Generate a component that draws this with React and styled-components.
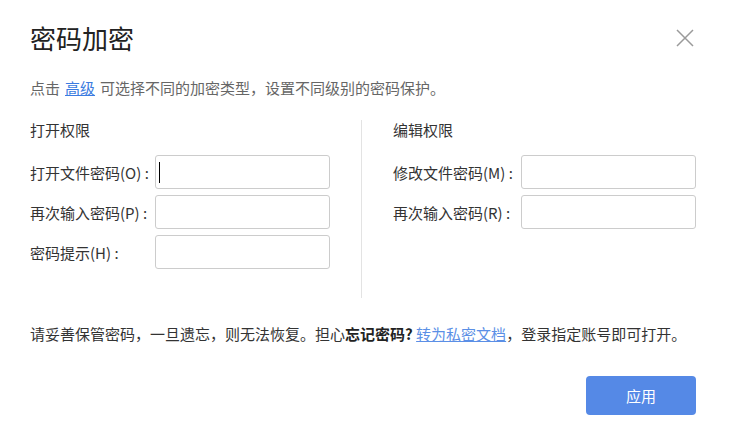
import React from "react";
import styled, { createGlobalStyle } from "styled-components";

const Global = createGlobalStyle`
  html, body {
    margin: 0;
    padding: 0;
    background: #fff;
  }
  body {
    font-family: "Noto Sans CJK SC", "Noto Sans", sans-serif;
    color: #333;
  }
`;

const Dialog = styled.div`
  width: 731px;
  height: 437px;
  box-sizing: border-box;
  padding: 18px 35px 0 30px;
  background: #fff;
  display: flex;
  flex-direction: column;
`;

const Header = styled.div`
  display: flex;
  align-items: center;
  justify-content: space-between;
  height: 40px;
`;

const Title = styled.h1`
  margin: 0;
  font-size: 26px;
  font-weight: 400;
  color: #222;
  line-height: 40px;
`;

const Close = styled.button`
  border: none;
  background: none;
  padding: 0;
  width: 18px;
  height: 18px;
  margin-right: 2px;
  cursor: pointer;
  display: flex;
`;

const Intro = styled.p`
  margin: 20px 0 0;
  font-size: 15px;
  line-height: 20px;
  color: #666;
`;

const Link = styled.a`
  color: ${p => (p.$light ? "#5b8fe6" : "#3b7be0")};
  text-decoration: underline;
  cursor: pointer;
  margin: ${p => (p.$spaced ? "0 5px" : "0")};
`;

const Columns = styled.div`
  display: flex;
  margin-top: 22px;
`;

const Column = styled.div`
  flex: ${p => (p.$right ? "1" : "0 0 331px")};
  box-sizing: border-box;
  padding: ${p => (p.$right ? "0 0 29px 31px" : "0 31px 29px 0")};
  border-left: ${p => (p.$right ? "1px solid #e3e3e3" : "none")};
`;

const Heading = styled.div`
  font-size: 15px;
  line-height: 20px;
  color: #333;
  margin-bottom: 15px;
`;

const Fields = styled.div`
  display: flex;
  flex-direction: column;
  gap: 6px;
`;

const Row = styled.label`
  display: grid;
  grid-template-columns: ${p => p.$labelWidth}px 1fr;
  align-items: center;
`;

const LabelText = styled.span`
  font-size: 15px;
  color: #333;
  white-space: nowrap;
`;

const InputWrap = styled.div`
  position: relative;
`;

const Input = styled.input`
  width: 100%;
  height: 34px;
  box-sizing: border-box;
  border: 1px solid #ccc;
  border-radius: 3px;
  outline: none;
  padding: 0 8px;
  font-size: 14px;
  font-family: inherit;
  background: #fff;
`;

const Caret = styled.span`
  position: absolute;
  left: 4px;
  top: 7px;
  width: 1px;
  height: 21px;
  background: #000;
`;

const Notice = styled.p`
  margin: 26px 0 0;
  font-size: 15px;
  line-height: 20px;
  color: #333;
  white-space: nowrap;

  b {
    font-weight: 700;
    color: #222;
  }
`;

const Footer = styled.div`
  display: flex;
  justify-content: flex-end;
  margin-top: 32px;
`;

const ApplyButton = styled.button`
  width: 110px;
  height: 39px;
  border: none;
  border-radius: 4px;
  background: #5589e6;
  color: #fff;
  font-size: 15px;
  font-family: inherit;
  cursor: pointer;
`;

const CloseIcon = () => (
  <svg width="18" height="18" viewBox="0 0 18 18">
    <path d="M1 1L17 17M17 1L1 17" stroke="#9a9a9a" strokeWidth="1.5" fill="none" />
  </svg>
);

const openFields = [
  { label: "打开文件密码(O) :", caret: true },
  { label: "再次输入密码(P) :" },
  { label: "密码提示(H) :" }
];

const editFields = [
  { label: "修改文件密码(M) :" },
  { label: "再次输入密码(R) :" }
];

const FieldGroup = ({ title, fields, labelWidth }) => (
  <>
    <Heading>{title}</Heading>
    <Fields>
      {fields.map(f => (
        <Row key={f.label} $labelWidth={labelWidth}>
          <LabelText>{f.label}</LabelText>
          <InputWrap>
            <Input type="password" />
            {f.caret && <Caret />}
          </InputWrap>
        </Row>
      ))}
    </Fields>
  </>
);

export default function App() {
  return (
    <>
      <Global />
      <Dialog>
        <Header>
          <Title>密码加密</Title>
          <Close aria-label="关闭">
            <CloseIcon />
          </Close>
        </Header>
        <Intro>
          点击<Link $spaced>高级</Link>可选择不同的加密类型，设置不同级别的密码保护。
        </Intro>
        <Columns>
          <Column>
            <FieldGroup title="打开权限" fields={openFields} labelWidth={125} />
          </Column>
          <Column $right>
            <FieldGroup title="编辑权限" fields={editFields} labelWidth={128} />
          </Column>
        </Columns>
        <Notice>
          请妥善保管密码，一旦遗忘，则无法恢复。担心<b>忘记密码?</b> <Link $light>转为私密文档</Link>，登录指定账号即可打开。
        </Notice>
        <Footer>
          <ApplyButton>应用</ApplyButton>
        </Footer>
      </Dialog>
    </>
  );
}
